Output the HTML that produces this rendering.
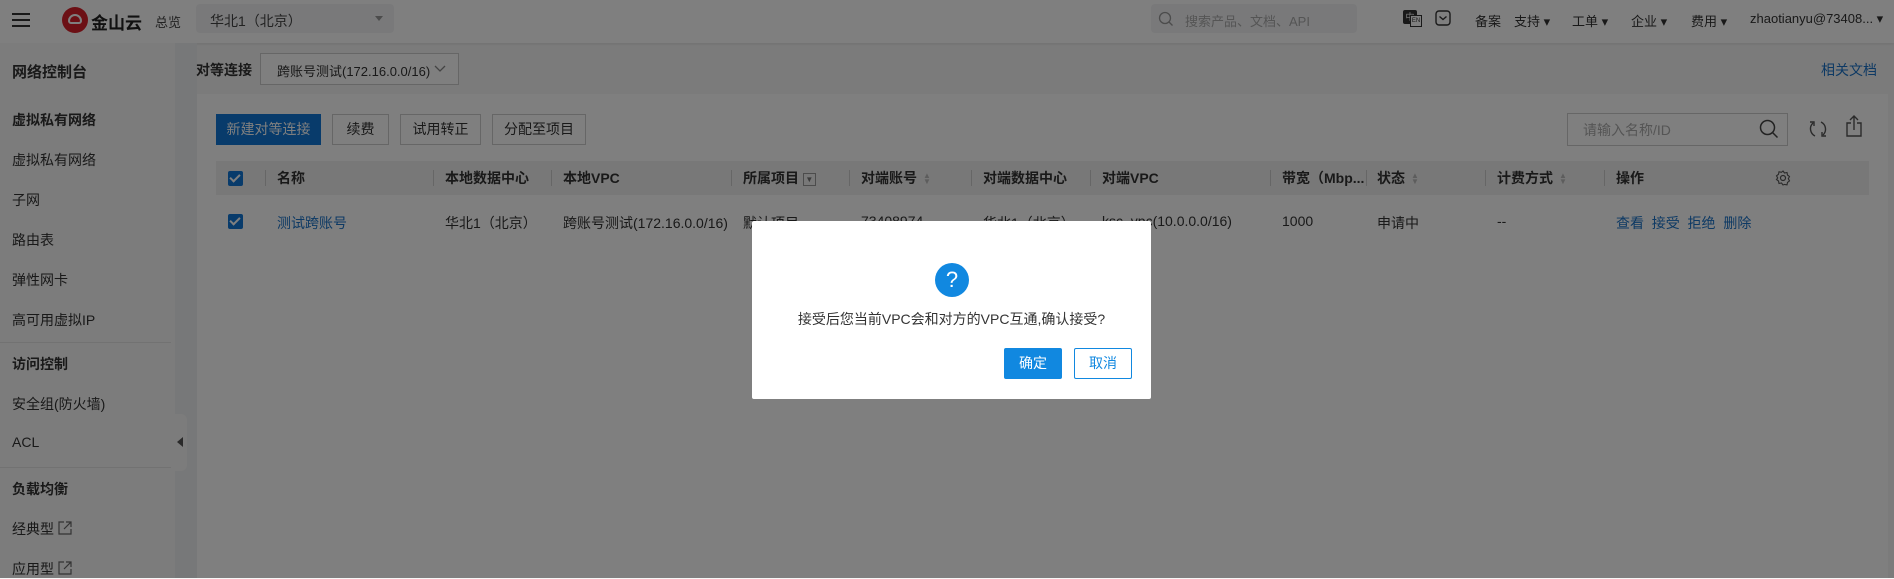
<!DOCTYPE html>
<html><head><meta charset="utf-8"><style>
*{box-sizing:border-box;margin:0;padding:0}
body{width:1894px;height:578px;overflow:hidden;position:relative;background:#f7f7f7;font-family:"Liberation Sans","Noto Sans CJK SC",sans-serif;font-size:14px;color:#333}
.a{position:absolute;white-space:nowrap}
.hdr{left:0;top:0;width:1894px;height:43px;background:#fff;box-shadow:0 1px 3px rgba(0,0,0,.1)}
.side{left:0;top:43px;width:175px;height:535px;background:#f8f8f8}
.strip{left:175px;top:43px;width:22px;height:535px;background:#eef0f2}
.si{left:12px;font-size:14px;color:#333}
.sb{font-weight:bold}
.btn{height:31px;border:1px solid #ccc;background:#fff;text-align:center;line-height:29px;font-size:14px;top:114px}
.th{top:161px;height:34px;line-height:34px;font-weight:bold;font-size:14px}
.sep{top:170px;width:1px;height:16px;background:#ccc}
.td{top:213px;font-size:14px}
.lnk{color:#1a73c8}
.cb{width:15px;height:15px;background:#1177d6;border-radius:2px}
.cb:after{content:"";position:absolute;left:4px;top:1px;width:4px;height:8px;border:solid #fff;border-width:0 2px 2px 0;transform:rotate(45deg)}
.ov{left:0;top:0;width:1894px;height:578px;background:rgba(0,0,0,.5)}
.sort{display:inline-block;width:8px;margin-left:6px;vertical-align:middle;color:#bbb;font-size:8px;line-height:6px}
svg{position:absolute}
</style></head><body>
<div class="a hdr"></div>
<div class="a" style="left:12px;top:13px;width:18px;height:2px;background:#333;box-shadow:0 6px 0 #333,0 12px 0 #333"></div>
<div class="a" style="left:62px;top:7px;width:26px;height:26px;border-radius:50%;background:#d8202a"></div>
<div class="a" style="left:68px;top:14px;width:14px;height:10px;border:2.5px solid #fff;border-radius:7px 7px 3px 3px"></div>
<div class="a" style="left:91px;top:9px;font-size:17px;font-weight:bold;color:#222">金山云</div>
<div class="a" style="left:155px;top:12px;font-size:13px;color:#444">总览</div>
<div class="a" style="left:196px;top:4px;width:198px;height:29px;background:#f2f3f5;border-radius:4px"></div>
<div class="a" style="left:210px;top:11px;font-size:14px;color:#444">华北1（北京）</div>
<div class="a" style="left:375px;top:16px;border:4px solid transparent;border-top:5px solid #999"></div>
<div class="a" style="left:1151px;top:4px;width:206px;height:29px;background:#f2f3f5;border-radius:4px"></div>
<svg style="left:1158px;top:11px" width="16" height="16" viewBox="0 0 16 16"><circle cx="7" cy="7" r="5.5" fill="none" stroke="#999" stroke-width="1.3"/><path d="M11 11l3.5 3.5" stroke="#999" stroke-width="1.3"/></svg>
<div class="a" style="left:1185px;top:11px;font-size:13px;color:#aaa">搜索产品、文档、API</div>
<div class="a" style="left:1403px;top:10px;width:14px;height:14px;background:#333;border-radius:2px;color:#fff;font-size:9px;line-height:14px;text-align:center">中</div>
<div class="a" style="left:1410px;top:15px;width:12px;height:12px;border:1px solid #333;background:#fff;font-size:6px;line-height:10px;text-align:center">EN</div>
<svg style="left:1435px;top:10px" width="16" height="16" viewBox="0 0 16 16"><rect x="1" y="1" width="14" height="14" rx="3" fill="none" stroke="#333" stroke-width="1.4"/><path d="M4.5 6.5l3.5 3 3.5-3" fill="none" stroke="#333" stroke-width="1.4"/></svg>
<div class="a" style="left:1475px;top:11px;font-size:13px">备案</div>
<div class="a" style="left:1514px;top:11px;font-size:13px">支持 ▾</div>
<div class="a" style="left:1572px;top:11px;font-size:13px">工单 ▾</div>
<div class="a" style="left:1631px;top:11px;font-size:13px">企业 ▾</div>
<div class="a" style="left:1691px;top:11px;font-size:13px">费用 ▾</div>
<div class="a" style="left:1750px;top:11px;font-size:13px">zhaotianyu@73408... ▾</div>

<div class="a side"></div>
<div class="a strip"></div>
<div class="a" style="left:175px;top:414px;width:12px;height:57px;background:#f8f8f8;border-radius:0 6px 6px 0"></div>
<div class="a" style="left:177px;top:437px;border:5px solid transparent;border-right:6px solid #555;border-left:0"></div>
<div class="a si sb" style="top:61px;font-size:15px">网络控制台</div>
<div class="a si sb" style="top:110px">虚拟私有网络</div>
<div class="a si" style="top:150px">虚拟私有网络</div>
<div class="a si" style="top:190px">子网</div>
<div class="a si" style="top:230px">路由表</div>
<div class="a si" style="top:270px">弹性网卡</div>
<div class="a si" style="top:310px">高可用虚拟IP</div>
<div class="a" style="left:0;top:342px;width:171px;height:1px;background:#e4e4e4"></div>
<div class="a si sb" style="top:354px">访问控制</div>
<div class="a si" style="top:394px">安全组(防火墙)</div>
<div class="a si" style="top:434px">ACL</div>
<div class="a" style="left:0;top:467px;width:171px;height:1px;background:#e4e4e4"></div>
<div class="a si sb" style="top:479px">负载均衡</div>
<div class="a si" style="top:519px">经典型</div>
<svg style="left:58px;top:521px" width="14" height="14" viewBox="0 0 14 14"><path d="M6 1H1v12h12V8M8 1h5v5M13 1L6 8" fill="none" stroke="#666" stroke-width="1.2"/></svg>
<div class="a si" style="top:559px">应用型</div>
<svg style="left:58px;top:561px" width="14" height="14" viewBox="0 0 14 14"><path d="M6 1H1v12h12V8M8 1h5v5M13 1L6 8" fill="none" stroke="#666" stroke-width="1.2"/></svg>

<div class="a" style="left:196px;top:60px;font-size:14px;font-weight:bold">对等连接</div>
<div class="a" style="left:260px;top:53px;width:199px;height:32px;border:1px solid #ccc;background:#fff"></div>
<div class="a" style="left:277px;top:61px;font-size:13px">跨账号测试(172.16.0.0/16)</div>
<svg style="left:434px;top:65px" width="12" height="8" viewBox="0 0 12 8"><path d="M1 1l5 5 5-5" fill="none" stroke="#888" stroke-width="1.3"/></svg>
<div class="a lnk" style="left:1821px;top:60px;font-size:14px">相关文档</div>

<div class="a" style="left:197px;top:94px;width:1691px;height:484px;background:#fff"></div>
<div class="a btn" style="left:216px;width:105px;background:#1177d6;border-color:#1177d6;color:#fff">新建对等连接</div>
<div class="a btn" style="left:332px;width:57px">续费</div>
<div class="a btn" style="left:400px;width:81px">试用转正</div>
<div class="a btn" style="left:492px;width:94px">分配至项目</div>
<div class="a" style="left:1567px;top:113px;width:221px;height:33px;border:1px solid #ccc"></div>
<div class="a" style="left:1583px;top:120px;font-size:14px;color:#aaa">请输入名称/ID</div>
<svg style="left:1759px;top:119px" width="20" height="20" viewBox="0 0 20 20"><circle cx="8.5" cy="8.5" r="7" fill="none" stroke="#444" stroke-width="1.5"/><path d="M13.5 13.5l5 5" stroke="#444" stroke-width="1.5"/></svg>
<svg style="left:1808px;top:119px" width="20" height="20" viewBox="0 0 20 20"><path d="M5 4A8 8 0 0 0 7 17M15 16A8 8 0 0 0 13 3" fill="none" stroke="#555" stroke-width="1.4"/><path d="M2 3h4v4M18 17h-4v-4" fill="none" stroke="#555" stroke-width="1.4"/></svg>
<svg style="left:1845px;top:114px" width="18" height="24" viewBox="0 0 18 24"><path d="M6 9H2v13h14V9h-4M9 2v14M5 6l4-4 4 4" fill="none" stroke="#555" stroke-width="1.4"/></svg>

<div class="a" style="left:216px;top:161px;width:1653px;height:34px;background:#f0f0f0"></div>
<div class="a cb" style="left:228px;top:171px"></div>
<div class="a sep" style="left:265px"></div><div class="a th" style="left:277px">名称</div>
<div class="a sep" style="left:433px"></div><div class="a th" style="left:445px">本地数据中心</div>
<div class="a sep" style="left:551px"></div><div class="a th" style="left:563px">本地VPC</div>
<div class="a sep" style="left:731px"></div><div class="a th" style="left:743px">所属项目 <span style="display:inline-block;width:13px;height:13px;border:1px solid #999;vertical-align:middle;font-size:8px;line-height:11px;text-align:center;color:#777;font-weight:normal">▼</span></div>
<div class="a sep" style="left:849px"></div><div class="a th" style="left:861px">对端账号<span class="sort">▲<br>▼</span></div>
<div class="a sep" style="left:971px"></div><div class="a th" style="left:983px">对端数据中心</div>
<div class="a sep" style="left:1090px"></div><div class="a th" style="left:1102px">对端VPC</div>
<div class="a sep" style="left:1270px"></div><div class="a th" style="left:1282px">带宽（Mbp...</div>
<div class="a sep" style="left:1366px"></div><div class="a th" style="left:1377px">状态<span class="sort">▲<br>▼</span></div>
<div class="a sep" style="left:1485px"></div><div class="a th" style="left:1497px">计费方式<span class="sort">▲<br>▼</span></div>
<div class="a sep" style="left:1604px"></div><div class="a th" style="left:1616px">操作</div>
<svg style="left:1775px;top:170px" width="16" height="16" viewBox="0 0 16 16"><circle cx="8" cy="8" r="2.5" fill="none" stroke="#555" stroke-width="1.2"/><path d="M8 1l1.5 2 2.5-.5.5 2.5 2 1.5-1.2 2.2 1.2 2.2-2 1.5-.5 2.5-2.5-.5L8 15l-1.5-2-2.5.5-.5-2.5-2-1.5L2.7 8 1.5 5.8l2-1.5L4 1.8l2.5.5z" fill="none" stroke="#555" stroke-width="1.1"/></svg>

<div class="a cb" style="left:228px;top:214px"></div>
<div class="a td lnk" style="left:277px">测试跨账号</div>
<div class="a td" style="left:445px">华北1（北京）</div>
<div class="a td" style="left:563px">跨账号测试(172.16.0.0/16)</div>
<div class="a td" style="left:743px">默认项目</div>
<div class="a td" style="left:861px">73408974</div>
<div class="a td" style="left:983px">华北1（北京）</div>
<div class="a td" style="left:1102px">ksc_vpc(10.0.0.0/16)</div>
<div class="a td" style="left:1282px">1000</div>
<div class="a td" style="left:1377px">申请中</div>
<div class="a td" style="left:1497px">--</div>
<div class="a td lnk" style="left:1616px">查看&nbsp;&nbsp;接受&nbsp;&nbsp;拒绝&nbsp;&nbsp;删除</div>

<div class="a ov"></div>

<div class="a" style="left:752px;top:221px;width:399px;height:178px;background:#fff;border-radius:2px"></div>
<div class="a" style="left:935px;top:263px;width:34px;height:34px;border-radius:50%;background:#1188e0;color:#fff;font-size:22px;line-height:34px;text-align:center">?</div>
<div class="a" style="left:752px;top:309px;width:399px;text-align:center;font-size:14px;color:#333">接受后您当前VPC会和对方的VPC互通,确认接受?</div>
<div class="a" style="left:1004px;top:348px;width:58px;height:31px;background:#1188e0;color:#fff;text-align:center;line-height:31px;font-size:14px;border-radius:2px">确定</div>
<div class="a" style="left:1074px;top:348px;width:58px;height:31px;border:1px solid #1188e0;color:#1188e0;text-align:center;line-height:29px;font-size:14px;border-radius:2px">取消</div>
</body></html>
